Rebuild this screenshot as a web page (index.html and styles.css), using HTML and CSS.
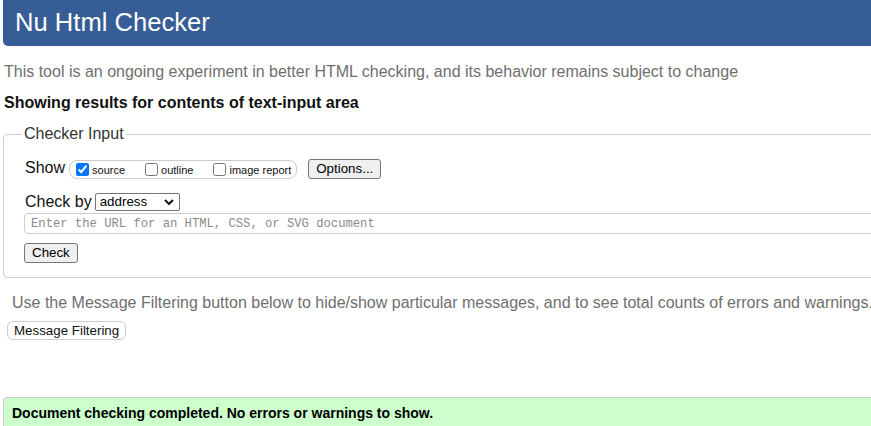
FILE: index.html
```html
<!DOCTYPE html>
<html lang="en">
<head>
<meta charset="utf-8">
<title>Nu Html Checker</title>
<link rel="stylesheet" href="styles.css">
</head>
<body>
<div class="page">
  <h1 class="title">Nu Html Checker</h1>
  <p class="intro">This tool is an ongoing experiment in better HTML checking, and its behavior remains subject to change</p>
  <p class="results-for">Showing results for contents of text-input area</p>
  <fieldset class="checker">
    <legend class="legend">Checker Input</legend>
    <div class="row row-show">
      <span class="row-label">Show</span>
      <span class="show-group">
        <label class="opt"><input type="checkbox" checked><span>source</span></label>
        <label class="opt"><input type="checkbox"><span>outline</span></label>
        <label class="opt"><input type="checkbox"><span>image report</span></label>
      </span>
      <button class="btn btn-options" type="button">Options...</button>
    </div>
    <div class="row row-by">
      <span class="row-label">Check by</span>
      <span class="select-wrap">
        <select class="by-select">
          <option>address</option>
          <option>file upload</option>
          <option>text input</option>
        </select>
        <svg class="chevron" width="10" height="6" viewBox="0 0 10 6" aria-hidden="true"><path d="M1 1 L5 5 L9 1" fill="none" stroke="#111" stroke-width="2"/></svg>
      </span>
    </div>
    <input class="url" type="url" placeholder="Enter the URL for an HTML, CSS, or SVG document">
    <div class="row row-submit">
      <button class="btn btn-check" type="submit">Check</button>
    </div>
  </fieldset>
  <p class="filter-note">Use the Message Filtering button below to hide/show particular messages, and to see total counts of errors and warnings.</p>
  <button class="btn-filter" type="button">Message Filtering</button>
  <div class="success">Document checking completed. No errors or warnings to show.</div>
</div>
</body>
</html>
```

FILE: styles.css
```css
html {
  overflow: hidden;
}

body {
  margin: 0;
  font-family: "Liberation Sans", Arial, sans-serif;
  color: #111;
  background: #fff;
}

.page {
  width: 930px;
  padding-left: 3px;
}

.title {
  margin: 0;
  padding: 8px 12px 9px;
  line-height: 29px;
  font-size: 25.6px;
  font-weight: normal;
  color: #fff;
  background: #365d95;
  border-radius: 0 0 0 5px;
}

.intro {
  margin: 17px 0 0;
  padding-left: 1px;
  font-size: 16px;
  color: #6f6f6f;
}

.results-for {
  margin: 13px 0 0;
  padding-left: 1px;
  font-size: 16px;
  font-weight: bold;
  color: #111;
}

.checker {
  margin: 13px 0 0;
  padding: 0 0 14px 18px;
  border: 1px solid #cccccc;
  border-radius: 4px;
  min-inline-size: 0;
}

.legend {
  padding: 0 2px;
  font-size: 16px;
  color: #333;
}

.row {
  display: flex;
  align-items: center;
  margin-left: 3px;
}

.row-label {
  font-size: 16px;
  color: #111;
  line-height: 18px;
}

.row-show {
  margin-top: 16px;
  height: 20px;
}

.row-show .row-label {
  margin-bottom: 2px;
}

.show-group {
  display: flex;
  align-items: center;
  height: 17px;
  margin-left: 4px;
  padding: 0 5px 0 2px;
  border: 1px solid #cccccc;
  border-radius: 8px;
}

.opt {
  display: flex;
  align-items: center;
  font-size: 11px;
  color: #111;
  margin-right: 16px;
}

.opt:last-child {
  margin-right: 0;
}

.opt input {
  width: 13px;
  height: 13px;
  margin: 0 3px 0 4px;
}

.opt span {
  padding-top: 2px;
}

.btn {
  box-sizing: border-box;
  font-family: "Liberation Sans", Arial, sans-serif;
  font-size: 13.33px;
  color: #000;
  background: #efefef;
  border: 1px solid #767676;
  border-radius: 3px;
  height: 20px;
  padding: 0 7px;
  line-height: 16px;
}

.btn-options {
  margin-left: 11px;
}

.row-by {
  margin-top: 14px;
  height: 18px;
}

.select-wrap {
  position: relative;
  display: inline-flex;
  margin-left: 3px;
}

.by-select {
  -webkit-appearance: none;
  appearance: none;
  box-sizing: border-box;
  width: 85px;
  height: 18px;
  font-family: "Liberation Sans", Arial, sans-serif;
  font-size: 13.33px;
  line-height: 16px;
  color: #000;
  background: #fff;
  border: 1px solid #767676;
  border-radius: 2px;
  padding: 0 0 0 4px;
}

.chevron {
  position: absolute;
  right: 6px;
  top: 6px;
  pointer-events: none;
}

.url {
  display: block;
  box-sizing: border-box;
  width: calc(100% - 2px);
  height: 21px;
  margin: 2px 0 0 2px;
  padding: 0 6px;
  border: 1px solid #cccccc;
  border-radius: 4px;
  font-family: "Liberation Mono", "DejaVu Sans Mono", monospace;
  font-size: 12.2px;
  color: #333;
}

.url::placeholder {
  color: #8a8a8a;
}

.row-submit {
  margin: 9px 0 0 2px;
}

.btn-check {
  padding: 0 7px;
}

.filter-note {
  margin: 16px 0 0;
  padding-left: 9px;
  font-size: 16px;
  color: #6f6f6f;
  white-space: nowrap;
}

.btn-filter {
  display: block;
  box-sizing: border-box;
  margin: 9px 0 0 4px;
  height: 19px;
  padding: 0 6px;
  font-family: "Liberation Sans", Arial, sans-serif;
  font-size: 13.33px;
  line-height: 15px;
  color: #111;
  background: #fff;
  border: 1px solid #cccccc;
  border-radius: 6px;
}

.success {
  margin-top: 57px;
  padding: 7px 8px 8px;
  font-size: 14px;
  font-weight: bold;
  color: #000;
  background: #ccffcc;
  border: 1px solid #cccccc;
  border-radius: 4px 0 0 0;
}
```
